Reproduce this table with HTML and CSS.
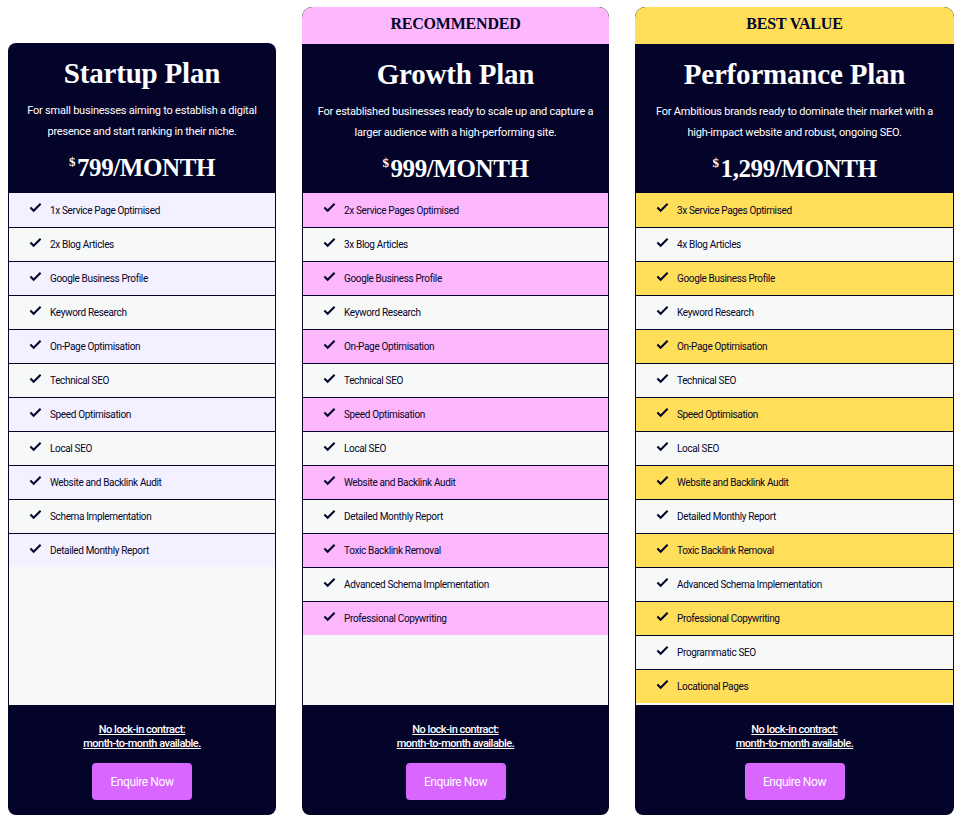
FILE: index.html
```html
<!DOCTYPE html>
<html lang="en">
<head>
<meta charset="utf-8">
<title>Pricing</title>
<link rel="stylesheet" href="styles.css">
</head>
<body>
<main class="plans">
  <section class="card card-startup">
    <header class="card-head">
      <h2 class="title">Startup Plan</h2>
      <p class="desc">For small businesses aiming to establish a digital presence and start ranking in their niche.</p>
      <p class="price"><sup>$</sup>799/MONTH</p>
    </header>
    <ul class="features">
      <li><svg class="chk" viewBox="0 0 14 11"><path d="M1.5 5.5 L5 9 L12.5 1.5"/></svg>1x Service Page Optimised</li>
      <li><svg class="chk" viewBox="0 0 14 11"><path d="M1.5 5.5 L5 9 L12.5 1.5"/></svg>2x Blog Articles</li>
      <li><svg class="chk" viewBox="0 0 14 11"><path d="M1.5 5.5 L5 9 L12.5 1.5"/></svg>Google Business Profile</li>
      <li><svg class="chk" viewBox="0 0 14 11"><path d="M1.5 5.5 L5 9 L12.5 1.5"/></svg>Keyword Research</li>
      <li><svg class="chk" viewBox="0 0 14 11"><path d="M1.5 5.5 L5 9 L12.5 1.5"/></svg>On-Page Optimisation</li>
      <li><svg class="chk" viewBox="0 0 14 11"><path d="M1.5 5.5 L5 9 L12.5 1.5"/></svg>Technical SEO</li>
      <li><svg class="chk" viewBox="0 0 14 11"><path d="M1.5 5.5 L5 9 L12.5 1.5"/></svg>Speed Optimisation</li>
      <li><svg class="chk" viewBox="0 0 14 11"><path d="M1.5 5.5 L5 9 L12.5 1.5"/></svg>Local SEO</li>
      <li><svg class="chk" viewBox="0 0 14 11"><path d="M1.5 5.5 L5 9 L12.5 1.5"/></svg>Website and Backlink Audit</li>
      <li><svg class="chk" viewBox="0 0 14 11"><path d="M1.5 5.5 L5 9 L12.5 1.5"/></svg>Schema Implementation</li>
      <li><svg class="chk" viewBox="0 0 14 11"><path d="M1.5 5.5 L5 9 L12.5 1.5"/></svg>Detailed Monthly Report</li>
    </ul>
    <footer class="card-foot">
      <a class="note" href="#">No lock-in contract:<br>month-to-month available.</a>
      <a class="btn" href="#">Enquire Now</a>
    </footer>
  </section>

  <section class="card card-growth">
    <div class="badge">RECOMMENDED</div>
    <header class="card-head">
      <h2 class="title">Growth Plan</h2>
      <p class="desc">For established businesses ready to scale up and capture a larger audience with a high-performing site.</p>
      <p class="price"><sup>$</sup>999/MONTH</p>
    </header>
    <ul class="features">
      <li><svg class="chk" viewBox="0 0 14 11"><path d="M1.5 5.5 L5 9 L12.5 1.5"/></svg>2x Service Pages Optimised</li>
      <li><svg class="chk" viewBox="0 0 14 11"><path d="M1.5 5.5 L5 9 L12.5 1.5"/></svg>3x Blog Articles</li>
      <li><svg class="chk" viewBox="0 0 14 11"><path d="M1.5 5.5 L5 9 L12.5 1.5"/></svg>Google Business Profile</li>
      <li><svg class="chk" viewBox="0 0 14 11"><path d="M1.5 5.5 L5 9 L12.5 1.5"/></svg>Keyword Research</li>
      <li><svg class="chk" viewBox="0 0 14 11"><path d="M1.5 5.5 L5 9 L12.5 1.5"/></svg>On-Page Optimisation</li>
      <li><svg class="chk" viewBox="0 0 14 11"><path d="M1.5 5.5 L5 9 L12.5 1.5"/></svg>Technical SEO</li>
      <li><svg class="chk" viewBox="0 0 14 11"><path d="M1.5 5.5 L5 9 L12.5 1.5"/></svg>Speed Optimisation</li>
      <li><svg class="chk" viewBox="0 0 14 11"><path d="M1.5 5.5 L5 9 L12.5 1.5"/></svg>Local SEO</li>
      <li><svg class="chk" viewBox="0 0 14 11"><path d="M1.5 5.5 L5 9 L12.5 1.5"/></svg>Website and Backlink Audit</li>
      <li><svg class="chk" viewBox="0 0 14 11"><path d="M1.5 5.5 L5 9 L12.5 1.5"/></svg>Detailed Monthly Report</li>
      <li><svg class="chk" viewBox="0 0 14 11"><path d="M1.5 5.5 L5 9 L12.5 1.5"/></svg>Toxic Backlink Removal</li>
      <li><svg class="chk" viewBox="0 0 14 11"><path d="M1.5 5.5 L5 9 L12.5 1.5"/></svg>Advanced Schema Implementation</li>
      <li><svg class="chk" viewBox="0 0 14 11"><path d="M1.5 5.5 L5 9 L12.5 1.5"/></svg>Professional Copywriting</li>
    </ul>
    <footer class="card-foot">
      <a class="note" href="#">No lock-in contract:<br>month-to-month available.</a>
      <a class="btn" href="#">Enquire Now</a>
    </footer>
  </section>

  <section class="card card-performance">
    <div class="badge">BEST VALUE</div>
    <header class="card-head">
      <h2 class="title">Performance Plan</h2>
      <p class="desc">For Ambitious brands ready to dominate their market with a high-impact website and robust, ongoing SEO.</p>
      <p class="price"><sup>$</sup>1,299/MONTH</p>
    </header>
    <ul class="features">
      <li><svg class="chk" viewBox="0 0 14 11"><path d="M1.5 5.5 L5 9 L12.5 1.5"/></svg>3x Service Pages Optimised</li>
      <li><svg class="chk" viewBox="0 0 14 11"><path d="M1.5 5.5 L5 9 L12.5 1.5"/></svg>4x Blog Articles</li>
      <li><svg class="chk" viewBox="0 0 14 11"><path d="M1.5 5.5 L5 9 L12.5 1.5"/></svg>Google Business Profile</li>
      <li><svg class="chk" viewBox="0 0 14 11"><path d="M1.5 5.5 L5 9 L12.5 1.5"/></svg>Keyword Research</li>
      <li><svg class="chk" viewBox="0 0 14 11"><path d="M1.5 5.5 L5 9 L12.5 1.5"/></svg>On-Page Optimisation</li>
      <li><svg class="chk" viewBox="0 0 14 11"><path d="M1.5 5.5 L5 9 L12.5 1.5"/></svg>Technical SEO</li>
      <li><svg class="chk" viewBox="0 0 14 11"><path d="M1.5 5.5 L5 9 L12.5 1.5"/></svg>Speed Optimisation</li>
      <li><svg class="chk" viewBox="0 0 14 11"><path d="M1.5 5.5 L5 9 L12.5 1.5"/></svg>Local SEO</li>
      <li><svg class="chk" viewBox="0 0 14 11"><path d="M1.5 5.5 L5 9 L12.5 1.5"/></svg>Website and Backlink Audit</li>
      <li><svg class="chk" viewBox="0 0 14 11"><path d="M1.5 5.5 L5 9 L12.5 1.5"/></svg>Detailed Monthly Report</li>
      <li><svg class="chk" viewBox="0 0 14 11"><path d="M1.5 5.5 L5 9 L12.5 1.5"/></svg>Toxic Backlink Removal</li>
      <li><svg class="chk" viewBox="0 0 14 11"><path d="M1.5 5.5 L5 9 L12.5 1.5"/></svg>Advanced Schema Implementation</li>
      <li><svg class="chk" viewBox="0 0 14 11"><path d="M1.5 5.5 L5 9 L12.5 1.5"/></svg>Professional Copywriting</li>
      <li><svg class="chk" viewBox="0 0 14 11"><path d="M1.5 5.5 L5 9 L12.5 1.5"/></svg>Programmatic SEO</li>
      <li><svg class="chk" viewBox="0 0 14 11"><path d="M1.5 5.5 L5 9 L12.5 1.5"/></svg>Locational Pages</li>
    </ul>
    <footer class="card-foot">
      <a class="note" href="#">No lock-in contract:<br>month-to-month available.</a>
      <a class="btn" href="#">Enquire Now</a>
    </footer>
  </section>
</main>
</body>
</html>
```

FILE: styles.css
```css
* { box-sizing: border-box; }

body {
  margin: 0;
  background: #ffffff;
  font-family: Roboto, "Liberation Sans", sans-serif;
  color: #04042a;
}

.plans {
  display: flex;
  align-items: flex-end;
  gap: 26px;
  padding: 7px 0 0 8px;
}

.card {
  display: flex;
  flex-direction: column;
  border-radius: 8px;
  overflow: hidden;
  background: #04042a;
}
.card-startup { width: 268px; }
.card-growth { width: 307px; }
.card-performance { width: 319px; }

.badge {
  height: 37px;
  padding-bottom: 4px;
  display: flex;
  align-items: center;
  justify-content: center;
  font-family: "Liberation Serif", serif;
  font-weight: 700;
  font-size: 16px;
  letter-spacing: -0.2px;
  color: #04042a;
  border-radius: 10px 10px 0 0;
}
.card-growth .badge { background: #fdb8fd; }
.card-performance .badge { background: #ffde59; }
.card-growth, .card-performance { border-radius: 10px 10px 8px 8px; }

.card-head {
  height: 150px;
  padding: 12px 12px 0;
  text-align: center;
  color: #ffffff;
}
.card-growth .card-head, .card-performance .card-head { height: 149px; }

.title {
  margin: 0;
  font-family: "Liberation Serif", serif;
  font-weight: 700;
  font-size: 29px;
  line-height: 36px;
  letter-spacing: -0.2px;
}

.desc {
  margin: 9px 0 0;
  font-size: 11px;
  line-height: 21px;
  letter-spacing: -0.22px;
}

.price {
  margin: 10px 0 0;
  font-family: "Liberation Serif", serif;
  font-weight: 700;
  font-size: 25px;
  line-height: 32px;
  letter-spacing: -0.4px;
}
.price sup {
  font-size: 13px;
  vertical-align: 0;
  position: relative;
  top: -10px;
  margin-right: 2px;
}

.features {
  list-style: none;
  margin: 0;
  padding: 0;
  height: 512px;
  background: #f7f9f9;
  border-left: 1px solid #04042a;
  border-right: 1px solid #04042a;
}
.features li {
  height: 34px;
  display: flex;
  align-items: center;
  padding-left: 20px;
  font-size: 10px;
  letter-spacing: -0.35px;
  color: #04042a;
}
.features li + li { border-top: 1px solid #04042a; }
.card-startup .features li:nth-child(odd) { background: #f3f0ff; }
.card-growth .features li:nth-child(odd) { background: #fdb8fd; }
.card-performance .features li:nth-child(odd) { background: #ffde59; }

.chk {
  width: 13px;
  height: 11px;
  margin-right: 8px;
  margin-top: -5px;
  fill: none;
  stroke: #04042a;
  stroke-width: 2.2;
  stroke-linecap: butt;
  stroke-linejoin: miter;
  flex: none;
}

.card-foot {
  height: 110px;
  display: flex;
  flex-direction: column;
  align-items: center;
  padding-top: 18px;
}
.note {
  color: #ffffff;
  font-size: 11px;
  font-weight: 500;
  line-height: 14px;
  letter-spacing: -0.5px;
  text-align: center;
  text-decoration: underline;
  text-underline-offset: 1px;
}
.btn {
  margin-top: 12px;
  width: 100px;
  height: 37px;
  display: flex;
  align-items: center;
  justify-content: center;
  background: #d966ff;
  border-radius: 4px;
  color: #ffffff;
  font-size: 12px;
  letter-spacing: -0.4px;
  text-decoration: none;
}
```
